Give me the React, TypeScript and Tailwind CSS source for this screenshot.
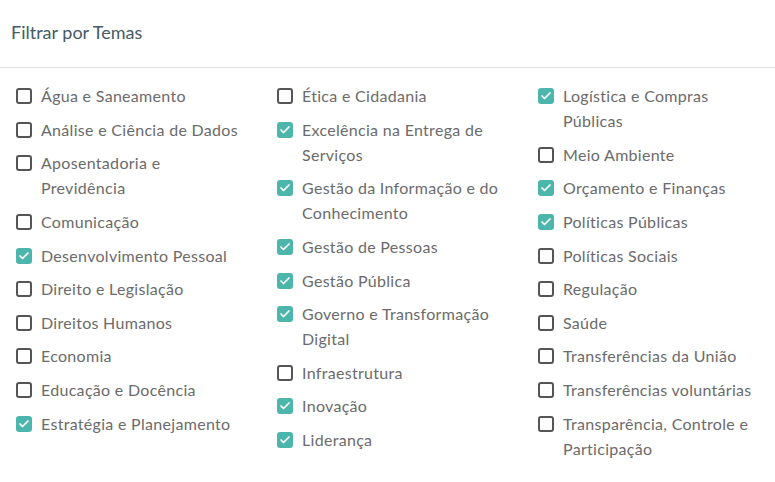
import { Check } from "lucide-react";

type Tema = { label: string; checked: boolean };

const colunas: Tema[][] = [
  [
    { label: "Água e Saneamento", checked: false },
    { label: "Análise e Ciência de Dados", checked: false },
    { label: "Aposentadoria e Previdência", checked: false },
    { label: "Comunicação", checked: false },
    { label: "Desenvolvimento Pessoal", checked: true },
    { label: "Direito e Legislação", checked: false },
    { label: "Direitos Humanos", checked: false },
    { label: "Economia", checked: false },
    { label: "Educação e Docência", checked: false },
    { label: "Estratégia e Planejamento", checked: true },
  ],
  [
    { label: "Ética e Cidadania", checked: false },
    { label: "Excelência na Entrega de Serviços", checked: true },
    { label: "Gestão da Informação e do Conhecimento", checked: true },
    { label: "Gestão de Pessoas", checked: true },
    { label: "Gestão Pública", checked: true },
    { label: "Governo e Transformação Digital", checked: true },
    { label: "Infraestrutura", checked: false },
    { label: "Inovação", checked: true },
    { label: "Liderança", checked: true },
  ],
  [
    { label: "Logística e Compras Públicas", checked: true },
    { label: "Meio Ambiente", checked: false },
    { label: "Orçamento e Finanças", checked: true },
    { label: "Políticas Públicas", checked: true },
    { label: "Políticas Sociais", checked: false },
    { label: "Regulação", checked: false },
    { label: "Saúde", checked: false },
    { label: "Transferências da União", checked: false },
    { label: "Transferências voluntárias", checked: false },
    { label: "Transparência, Controle e Participação", checked: false },
  ],
];

function Caixa({ checked }: { checked: boolean }) {
  if (checked) {
    return (
      <span className="mt-[5px] flex h-4 w-4 shrink-0 items-center justify-center rounded-[3px] bg-[#4db6ac]">
        <Check className="h-3 w-3 text-white" strokeWidth={3.5} />
      </span>
    );
  }
  return (
    <span className="mt-[5px] h-4 w-4 shrink-0 rounded-[3px] border-2 border-[#555]" />
  );
}

export default function App() {
  return (
    <div className="w-[775px] bg-white font-['Lato',sans-serif]">
      <div className="flex h-[68px] items-center border-b border-[#e0e0e0] pb-[2px] pl-[11px]">
        <h2 className="text-[18px] text-[#455a64]">Filtrar por Temas</h2>
      </div>
      <div className="grid grid-cols-[230px_230px_230px] gap-x-[31px] pl-4 pt-[15px] pb-6">
        {colunas.map((col, i) => (
          <ul key={i} className="flex flex-col gap-[8.65px]">
            {col.map((t) => (
              <li key={t.label} className="flex gap-[9px]">
                <Caixa checked={t.checked} />
                <span className="text-[16px] leading-[25px] tracking-[0.3px] text-[#6b6b6b]">
                  {t.label}
                </span>
              </li>
            ))}
          </ul>
        ))}
      </div>
    </div>
  );
}
